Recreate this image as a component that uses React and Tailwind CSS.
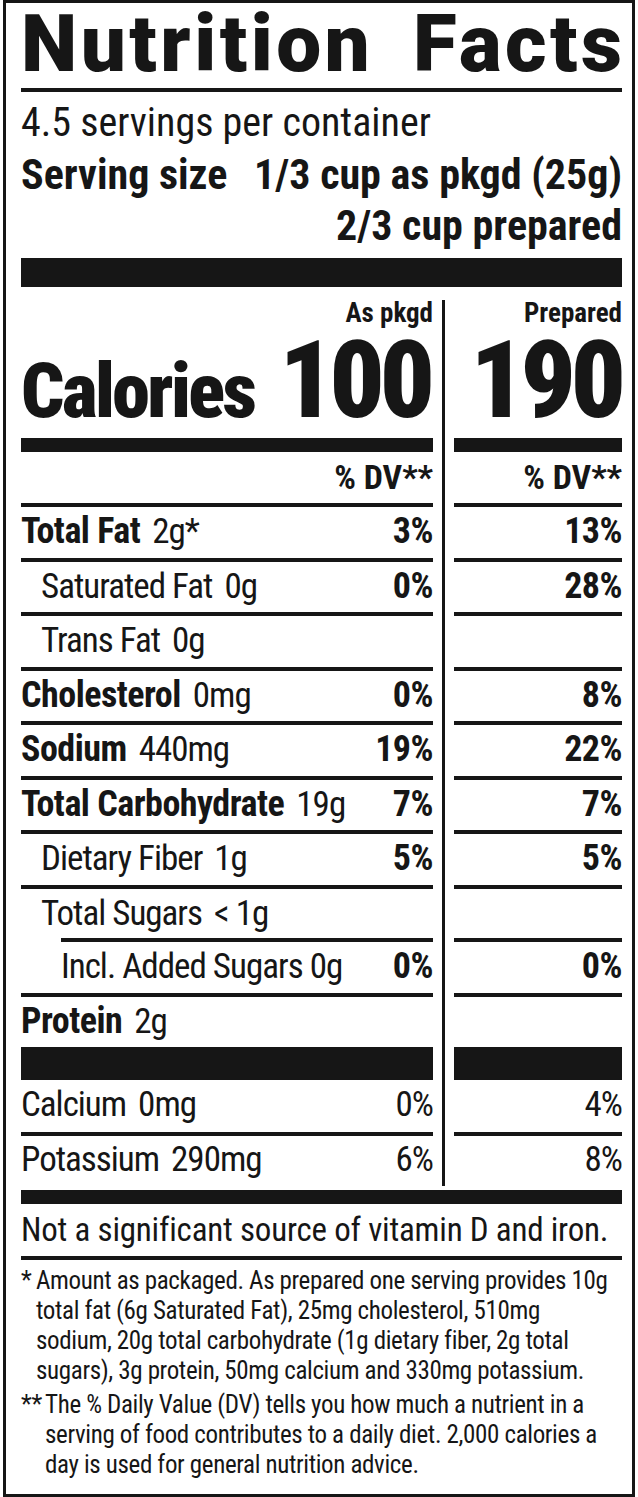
import React from 'react'

// Nutrition Facts label, dual column (as packaged / prepared)

const ink = 'bg-[#161616]'
const reg = 'text-[35px] tracking-[-1px]'
const bld = 'text-[36px] font-bold tracking-[-0.5px]'

const nutrients = [
  { id: 'fat', box: 'h-[51px]', label: 'Total Fat', amt: '2g*', bold: true, dv1: '3%', dv2: '13%' },
  { id: 'sat', box: 'h-[50px]', pad: 'pl-[20px]', label: 'Saturated Fat', amt: '0g', dv1: '0%', dv2: '28%' },
  { id: 'trans', box: 'h-[51px]', pad: 'pl-[20px]', label: 'Trans Fat', amt: '0g' },
  { id: 'chol', box: 'h-[50px]', label: 'Cholesterol', amt: '0mg', bold: true, dv1: '0%', dv2: '8%' },
  { id: 'sod', box: 'h-[51px]', label: 'Sodium', amt: '440mg', bold: true, dv1: '19%', dv2: '22%' },
  { id: 'carb', box: 'h-[50px]', label: 'Total Carbohydrate', amt: '19g', bold: true, dv1: '7%', dv2: '7%' },
  { id: 'fiber', box: 'h-[51px]', pad: 'pl-[20px]', label: 'Dietary Fiber', amt: '1g', dv1: '5%', dv2: '5%' },
  { id: 'sugar', box: 'h-[49px]', pad: 'pl-[20px]', label: 'Total Sugars', amt: '< 1g' },
  { id: 'added', box: 'h-[51px]', pad: 'pl-[40px]', inset: 'ml-[40px]', label: 'Incl. Added Sugars 0g', dv1: '0%', dv2: '0%' },
  { id: 'prot', box: 'h-[50px]', label: 'Protein', amt: '2g', bold: true },
]

function Divider({ className = '' }) {
  return (
    <div className={`w-[21px] flex flex-col items-center ${className}`}>
      <div className={`w-[3px] flex-1 ${ink}`} />
    </div>
  )
}

function NutrientRow({ n }) {
  return (
    <div className="flex">
      <div className="w-[412px]">
        <div className={`h-[4px] ${ink} ${n.inset || ''}`} />
        <div className={`${n.box} ${n.pad || ''} flex items-start justify-between leading-[48px] text-[36px]`}>
          <div className="whitespace-nowrap">
            <span className={n.bold ? bld : reg}>{n.label}</span>
            {n.amt && <span className={`ml-[12px] ${reg}`}>{n.amt}</span>}
          </div>
          {n.dv1 && <span className={bld}>{n.dv1}</span>}
        </div>
      </div>
      <Divider />
      <div className="w-[168px]">
        <div className={`h-[4px] ${ink}`} />
        <div className={`${n.box} flex items-start justify-end leading-[48px] text-[36px]`}>
          {n.dv2 && <span className={bld}>{n.dv2}</span>}
        </div>
      </div>
    </div>
  )
}

export default function App() {
  return (
    <div className="w-[638px] h-[1497px] bg-white text-[#161616] font-['Roboto',sans-serif] font-stretch-[75%]">
      <div className="ml-[3px] w-[632px] h-[1497px] border-[3px] border-[#161616] pl-[15px] pr-[10px]">
        {/* Title */}
        <div className="h-[85px] flex justify-between leading-[82px] text-[80px] font-black font-stretch-[100%] tracking-[3.5px] whitespace-nowrap">
          <span>Nutrition</span>
          <span className="mr-[-3.5px]">Facts</span>
        </div>
        <div className={`h-[4px] ${ink}`} />

        {/* Servings */}
        <div className="mt-[9px] leading-[44px] text-[40px] whitespace-nowrap">4.5 servings per container</div>
        <div className="flex justify-between leading-[60px] text-[42px] font-bold whitespace-nowrap">
          <span>Serving size</span>
          <span>1/3 cup as pkgd (25g)</span>
        </div>
        <div className="leading-[42px] text-[42px] font-bold text-right whitespace-nowrap">2/3 cup prepared</div>
        <div className={`mt-[11px] h-[29px] ${ink}`} />

        {/* Calories */}
        <div className="flex">
          <div className="w-[412px]">
            <div className="pt-[13px] leading-[26px] text-[27px] font-bold text-right">As pkgd</div>
            <div className="h-[112px] flex items-baseline justify-between leading-none font-black">
              <span className="text-[76px] tracking-[-2.5px]">Calories</span>
              <span className="text-[108px] tracking-[-5px] mr-[3px]">100</span>
            </div>
          </div>
          <Divider className="pt-[13px]" />
          <div className="w-[168px]">
            <div className="pt-[13px] leading-[26px] text-[27px] font-bold text-right">Prepared</div>
            <div className="h-[112px] flex items-baseline justify-end leading-none font-black">
              <span className="text-[108px] tracking-[-5px] mr-[1px]">190</span>
            </div>
          </div>
        </div>

        {/* Medium bar + DV heading */}
        <div className="flex">
          <div className="w-[412px]">
            <div className={`h-[14px] ${ink}`} />
            <div className="h-[51px] leading-[51px] text-[34px] font-bold text-right">% DV**</div>
          </div>
          <Divider />
          <div className="w-[168px]">
            <div className={`h-[14px] ${ink}`} />
            <div className="h-[51px] leading-[51px] text-[34px] font-bold text-right">% DV**</div>
          </div>
        </div>

        {nutrients.map((n) => (
          <NutrientRow key={n.id} n={n} />
        ))}

        {/* Minerals */}
        <div className="flex text-[36px]">
          <div className="w-[412px]">
            <div className={`h-[33px] ${ink}`} />
            <div className="h-[52px] flex items-start justify-between leading-[49px]">
              <span className={reg}>Calcium<span className="ml-[12px]">0mg</span></span>
              <span className={reg}>0%</span>
            </div>
            <div className={`h-[4px] ${ink}`} />
            <div className="h-[50px] flex items-start justify-between leading-[47px]">
              <span className={reg}>Potassium<span className="ml-[12px]">290mg</span></span>
              <span className={reg}>6%</span>
            </div>
          </div>
          <Divider />
          <div className="w-[168px]">
            <div className={`h-[33px] ${ink}`} />
            <div className="h-[52px] flex justify-end leading-[49px]"><span className={reg}>4%</span></div>
            <div className={`h-[4px] ${ink}`} />
            <div className="h-[50px] flex justify-end leading-[47px]"><span className={reg}>8%</span></div>
          </div>
        </div>

        <div className={`mt-[4px] h-[14px] ${ink}`} />
        <div className="leading-[52px] text-[33px] tracking-[-0.2px] whitespace-nowrap">
          Not a significant source of vitamin D and iron.
        </div>
        <div className={`h-[4px] ${ink}`} />

        {/* Footnotes */}
        <div className="mt-[6px] text-[25px] leading-[30px] tracking-[-0.35px]">
          <div className="flex">
            <span className="w-[15px] shrink-0">*</span>
            <div className="whitespace-nowrap">
              <div>Amount as packaged. As prepared one serving provides 10g</div>
              <div>total fat (6g Saturated Fat), 25mg cholesterol, 510mg</div>
              <div>sodium, 20g total carbohydrate (1g dietary fiber, 2g total</div>
              <div>sugars), 3g protein, 50mg calcium and 330mg potassium.</div>
            </div>
          </div>
          <div className="flex mt-[4px]">
            <span className="w-[24px] shrink-0">**</span>
            <div className="whitespace-nowrap">
              <div>The % Daily Value (DV) tells you how much a nutrient in a</div>
              <div>serving of food contributes to a daily diet. 2,000 calories a</div>
              <div>day is used for general nutrition advice.</div>
            </div>
          </div>
        </div>
      </div>
    </div>
  )
}
